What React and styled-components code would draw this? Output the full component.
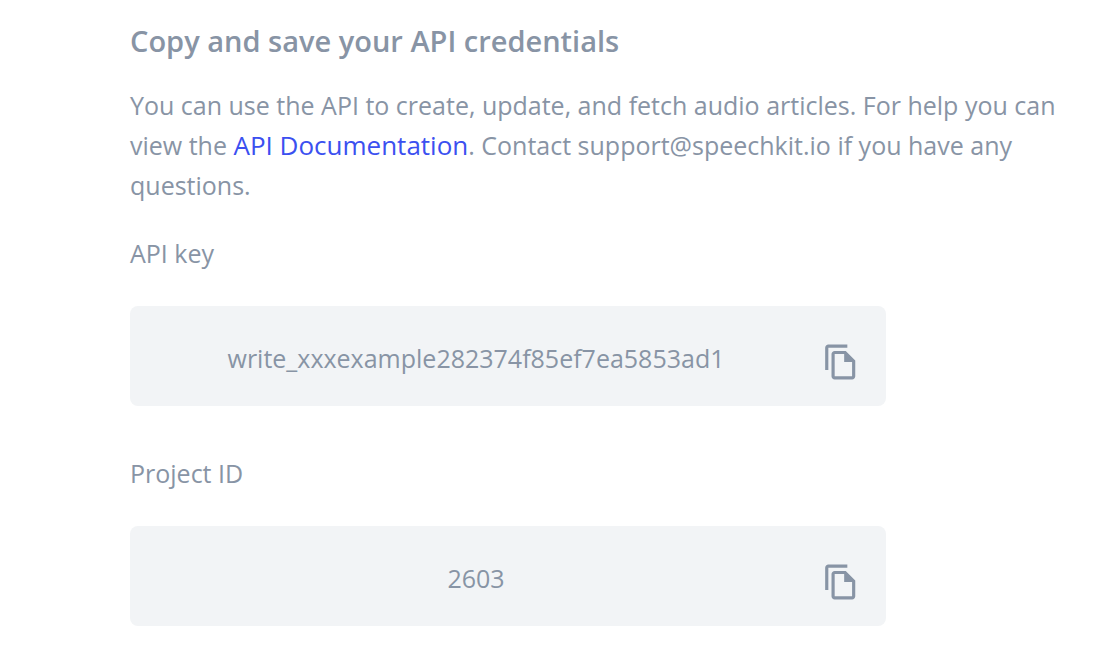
import React from "react";
import styled, { createGlobalStyle } from "styled-components";
import { MdOutlineFileCopy } from "react-icons/md";

const GlobalStyle = createGlobalStyle`
  *, *::before, *::after { box-sizing: border-box; }
  body {
    margin: 0;
    background: #ffffff;
    color: #8894a5;
    font: 400 25px/40px "Open Sans", "Noto Sans", sans-serif;
  }
`;

const Page = styled.main`
  padding: 21px 40px 36px 130px;
`;

const Title = styled.h1`
  margin: 0 0 24px;
  font-size: 29px;
  line-height: 40px;
  font-weight: 600;
`;

const Intro = styled.p`
  margin: 0 0 28px;
`;

const DocLink = styled.a`
  color: #3b50f0;
  font-size: 26px;
  line-height: 32px;
  text-decoration: none;
`;

const Credentials = styled.div`
  display: flex;
  flex-direction: column;
  gap: 47px;
  max-width: 756px;
`;

const Label = styled.label`
  display: block;
  margin-bottom: 33px;
`;

const KeyBox = styled.div`
  display: flex;
  align-items: center;
  gap: 26px;
  height: 100px;
  padding: 4px 26px 0;
  border-radius: 8px;
  background: #f2f4f6;
`;

const Value = styled.input`
  flex: 1;
  min-width: 0;
  height: 40px;
  padding: 0;
  border: 0;
  outline: 0;
  background: transparent;
  color: inherit;
  font: inherit;
  text-align: center;
`;

const CopyButton = styled.button`
  display: flex;
  padding: 8px 0 0;
  border: 0;
  background: transparent;
  color: inherit;
  cursor: pointer;
`;

function Credential({ id, label, value }) {
  return (
    <div>
      <Label htmlFor={id}>{label}</Label>
      <KeyBox>
        <Value id={id} value={value} readOnly />
        <CopyButton type="button" aria-label={`Copy ${label}`}>
          <MdOutlineFileCopy size={38} />
        </CopyButton>
      </KeyBox>
    </div>
  );
}

export default function App() {
  return (
    <Page>
      <GlobalStyle />
      <Title>Copy and save your API credentials</Title>
      <Intro>
        You can use the API to create, update, and fetch audio articles. For help you can view the{" "}
        <DocLink href="#documentation">API Documentation</DocLink>. Contact support@speechkit.io if
        you have any questions.
      </Intro>
      <Credentials>
        <Credential id="api-key" label="API key" value="write_xxxexample282374f85ef7ea5853ad1" />
        <Credential id="project-id" label="Project ID" value="2603" />
      </Credentials>
    </Page>
  );
}
